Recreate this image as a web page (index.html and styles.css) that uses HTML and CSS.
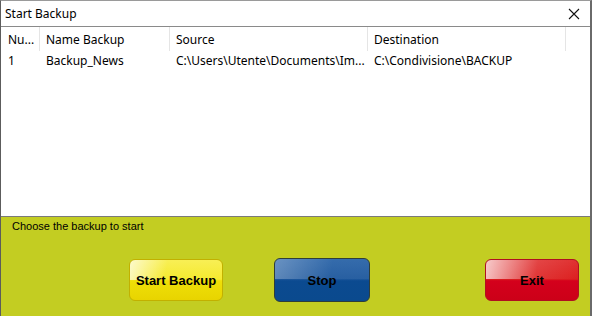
FILE: index.html
```html
<!DOCTYPE html>
<html lang="en">

<head>
    <meta charset="UTF-8">
    <title>Start Backup</title>
    <link rel="stylesheet" href="styles.css">
</head>

<body>
    <div class="window">
        <div class="title-bar">
            <span class="title">Start Backup</span>
            <span class="close">
                <svg width="12" height="12" viewBox="0 0 12 12">
                    <path d="M1 1 L11 11 M11 1 L1 11" stroke="#111" stroke-width="1.1" fill="none" />
                </svg>
            </span>
        </div>

        <div class="list">
            <div class="row header">
                <div class="cell c-num">Nu...</div>
                <div class="cell c-name">Name Backup</div>
                <div class="cell c-src">Source</div>
                <div class="cell c-dst">Destination</div>
                <div class="cell c-rest"></div>
            </div>
            <div class="row">
                <div class="cell c-num">1</div>
                <div class="cell c-name">Backup_News</div>
                <div class="cell c-src">C:\Users\Utente\Documents\Im...</div>
                <div class="cell c-dst">C:\Condivisione\BACKUP</div>
            </div>
        </div>

        <div class="panel">
            <div class="hint">Choose the backup to start</div>
            <div class="buttons">
                <button class="btn btn-yellow">Start Backup</button>
                <button class="btn btn-blue">Stop</button>
                <button class="btn btn-red">Exit</button>
            </div>
        </div>
    </div>
</body>

</html>
```

FILE: styles.css
```css
* {
    box-sizing: border-box;
}

body {
    margin: 0;
    font-family: "Noto Sans", "Open Sans", sans-serif;
    font-size: 12px;
    color: #000;
    background: #3a3a3a;
}

.window {
    width: 592px;
    height: 316px;
    display: flex;
    flex-direction: column;
    background: #fff;
    border-left: 1px solid #5c5c5c;
    border-top: 1px solid #9a9a9a;
    border-right: 2px solid #6a6a6a;
}

.title-bar {
    height: 26px;
    display: flex;
    align-items: center;
    justify-content: space-between;
    padding: 0 10px 0 4px;
    border-bottom: 1px solid #8a8a8a;
}

.title {
    font-size: 12px;
}

.close {
    display: flex;
    width: 12px;
    height: 12px;
}

.list {
    height: 190px;
    background: #fff;
    border-bottom: 1px solid #7a7a7a;
}

.row {
    display: flex;
    height: 18px;
    align-items: center;
}

.row.header {
    height: 24px;
}

.cell {
    padding-left: 6px;
    white-space: nowrap;
    overflow: hidden;
}

.row .c-num {
    padding-left: 7px;
}

.header .cell {
    height: 100%;
    display: flex;
    align-items: center;
    border-right: 1px solid #e5e5e5;
}

.header .c-rest {
    border-right: none;
}

.c-num {
    width: 39px;
}

.c-name {
    width: 130px;
}

.c-src {
    width: 198px;
}

.c-dst {
    width: 198px;
}

.c-rest {
    flex: 1;
}

.panel {
    flex: 1;
    background: #c3cd22;
    display: flex;
    flex-direction: column;
}

.hint {
    font-family: "Liberation Sans", Arial, sans-serif;
    font-size: 11px;
    padding: 3px 0 0 11px;
}

.buttons {
    display: flex;
    align-items: flex-start;
    padding: 27px 0 0 128px;
}

.btn {
    height: 42px;
    width: 94px;
    border-radius: 6px;
    font-family: "Liberation Sans", Arial, sans-serif;
    font-weight: bold;
    font-size: 13px;
    color: #000;
    padding: 0;
}

.btn-yellow {
    border: 1px solid #c2b000;
    background:
        linear-gradient(100deg, rgba(255, 255, 255, 0.7) 0%, rgba(255, 255, 255, 0) 40%) top / 100% 50% no-repeat,
        linear-gradient(to bottom, #f8ef55 0%, #f5ea30 48%, #efdf08 52%, #e8d400 100%);
}

.btn-blue {
    margin-left: 51px;
    width: 96px;
    height: 44px;
    margin-top: -1px;
    border: 1px solid #2e3e3a;
    background:
        linear-gradient(100deg, rgba(255, 255, 255, 0.3) 0%, rgba(255, 255, 255, 0.05) 60%) top / 100% 48% no-repeat,
        linear-gradient(to bottom, #2a64a8 0%, #1d579c 48%, #0b4a90 52%, #0a4a8e 100%);
}

.btn-red {
    margin-left: 115px;
    border: 1px solid #b01020;
    background:
        linear-gradient(100deg, rgba(255, 255, 255, 0.75) 0%, rgba(255, 255, 255, 0.1) 55%, rgba(255, 255, 255, 0) 100%) top / 100% 48% no-repeat,
        linear-gradient(to bottom, #e03030 0%, #dc2020 48%, #d4001c 52%, #cc0018 100%);
}
```
